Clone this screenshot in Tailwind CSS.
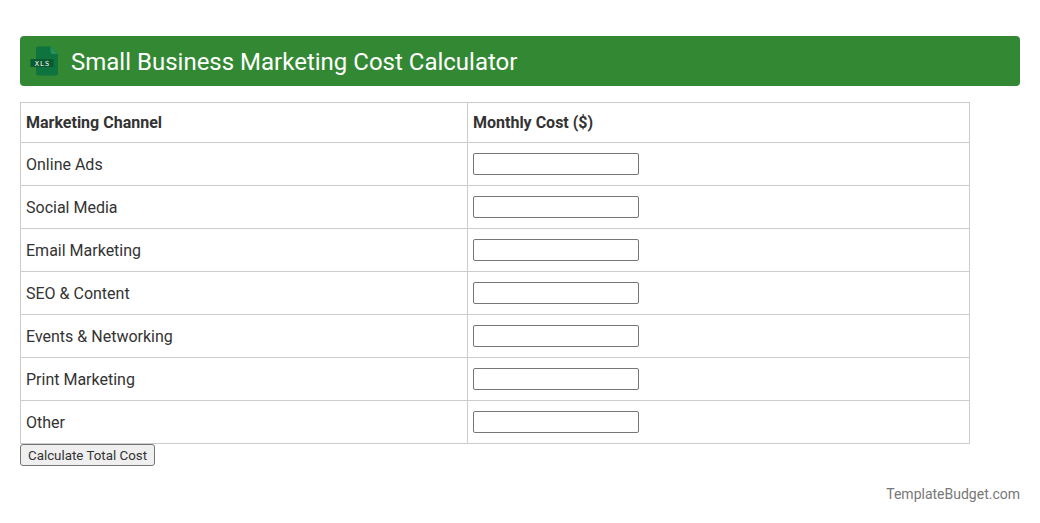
<!DOCTYPE html>
<html lang="en">
<head>
<meta charset="utf-8">
<title>Small Business Marketing Cost Calculator</title>
<script src="https://cdn.jsdelivr.net/npm/@tailwindcss/browser@4"></script>
</head>
<body class="bg-white font-['Roboto',sans-serif] text-[16px] leading-[19px] text-[#333]">
<div class="px-5 pt-9">
  <div class="flex h-[50px] items-center rounded-[4px] bg-[#338833] pl-[10px] text-white">
    <svg class="h-[32px] w-[32px] shrink-0" viewBox="0 0 32 32">
      <path d="M6 3.500a2 2 0 0 1 2-2h12.500L28 9v19.500a2 2 0 0 1-2 2H8a2 2 0 0 1-2-2z" fill="#0f733f"/>
      <path d="M20.500 1.500L28 9h-5.500a2 2 0 0 1-2-2z" fill="#25905a"/>
      <rect x="0.500" y="14" width="23" height="8" fill="#0a5a31"/>
      <text x="12.500" y="20.500" text-anchor="middle" font-family="'DejaVu Sans Mono',monospace" font-size="7" letter-spacing="1" fill="#fff">XLS</text>
    </svg>
    <h1 class="ml-[9px] pt-[2px] text-[24px] leading-[28px] font-normal">Small Business Marketing Cost Calculator</h1>
  </div>
  <table class="mt-4 w-[950px] table-fixed border-collapse">
    <colgroup><col class="w-[447px]"><col></colgroup>
    <thead>
      <tr class="h-10"><th class="border border-[#ccc] px-[5px] py-[10px] text-left font-bold">Marketing Channel</th><th class="border border-[#ccc] px-[5px] py-[10px] text-left font-bold">Monthly Cost ($)</th></tr>
    </thead>
    <tbody>
      <tr class="h-[43px]"><td class="border border-[#ccc] px-[5px] py-[10px]">Online Ads</td><td class="border border-[#ccc] px-[5px] py-[10px]"><input type="number" aria-label="Online Ads" class="block h-[22px] w-[166px] rounded-[2px] border border-[#767676] bg-white"></td></tr>
      <tr class="h-[43px]"><td class="border border-[#ccc] px-[5px] py-[10px]">Social Media</td><td class="border border-[#ccc] px-[5px] py-[10px]"><input type="number" aria-label="Social Media" class="block h-[22px] w-[166px] rounded-[2px] border border-[#767676] bg-white"></td></tr>
      <tr class="h-[43px]"><td class="border border-[#ccc] px-[5px] py-[10px]">Email Marketing</td><td class="border border-[#ccc] px-[5px] py-[10px]"><input type="number" aria-label="Email Marketing" class="block h-[22px] w-[166px] rounded-[2px] border border-[#767676] bg-white"></td></tr>
      <tr class="h-[43px]"><td class="border border-[#ccc] px-[5px] py-[10px]">SEO &amp; Content</td><td class="border border-[#ccc] px-[5px] py-[10px]"><input type="number" aria-label="SEO and Content" class="block h-[22px] w-[166px] rounded-[2px] border border-[#767676] bg-white"></td></tr>
      <tr class="h-[43px]"><td class="border border-[#ccc] px-[5px] py-[10px]">Events &amp; Networking</td><td class="border border-[#ccc] px-[5px] py-[10px]"><input type="number" aria-label="Events and Networking" class="block h-[22px] w-[166px] rounded-[2px] border border-[#767676] bg-white"></td></tr>
      <tr class="h-[43px]"><td class="border border-[#ccc] px-[5px] py-[10px]">Print Marketing</td><td class="border border-[#ccc] px-[5px] py-[10px]"><input type="number" aria-label="Print Marketing" class="block h-[22px] w-[166px] rounded-[2px] border border-[#767676] bg-white"></td></tr>
      <tr class="h-[43px]"><td class="border border-[#ccc] px-[5px] py-[10px]">Other</td><td class="border border-[#ccc] px-[5px] py-[10px]"><input type="number" aria-label="Other" class="block h-[22px] w-[166px] rounded-[2px] border border-[#767676] bg-white"></td></tr>
    </tbody>
  </table>
  <button class="block h-[22px] w-[135px] rounded-[3px] border border-[#767676] bg-[#efefef] pt-[2px] text-[13.33px] leading-[16px] text-[#333]">Calculate Total Cost</button>
  <p class="mt-5 text-right text-[14px] leading-4 text-[#777]">TemplateBudget.com</p>
</div>
</body>
</html>
